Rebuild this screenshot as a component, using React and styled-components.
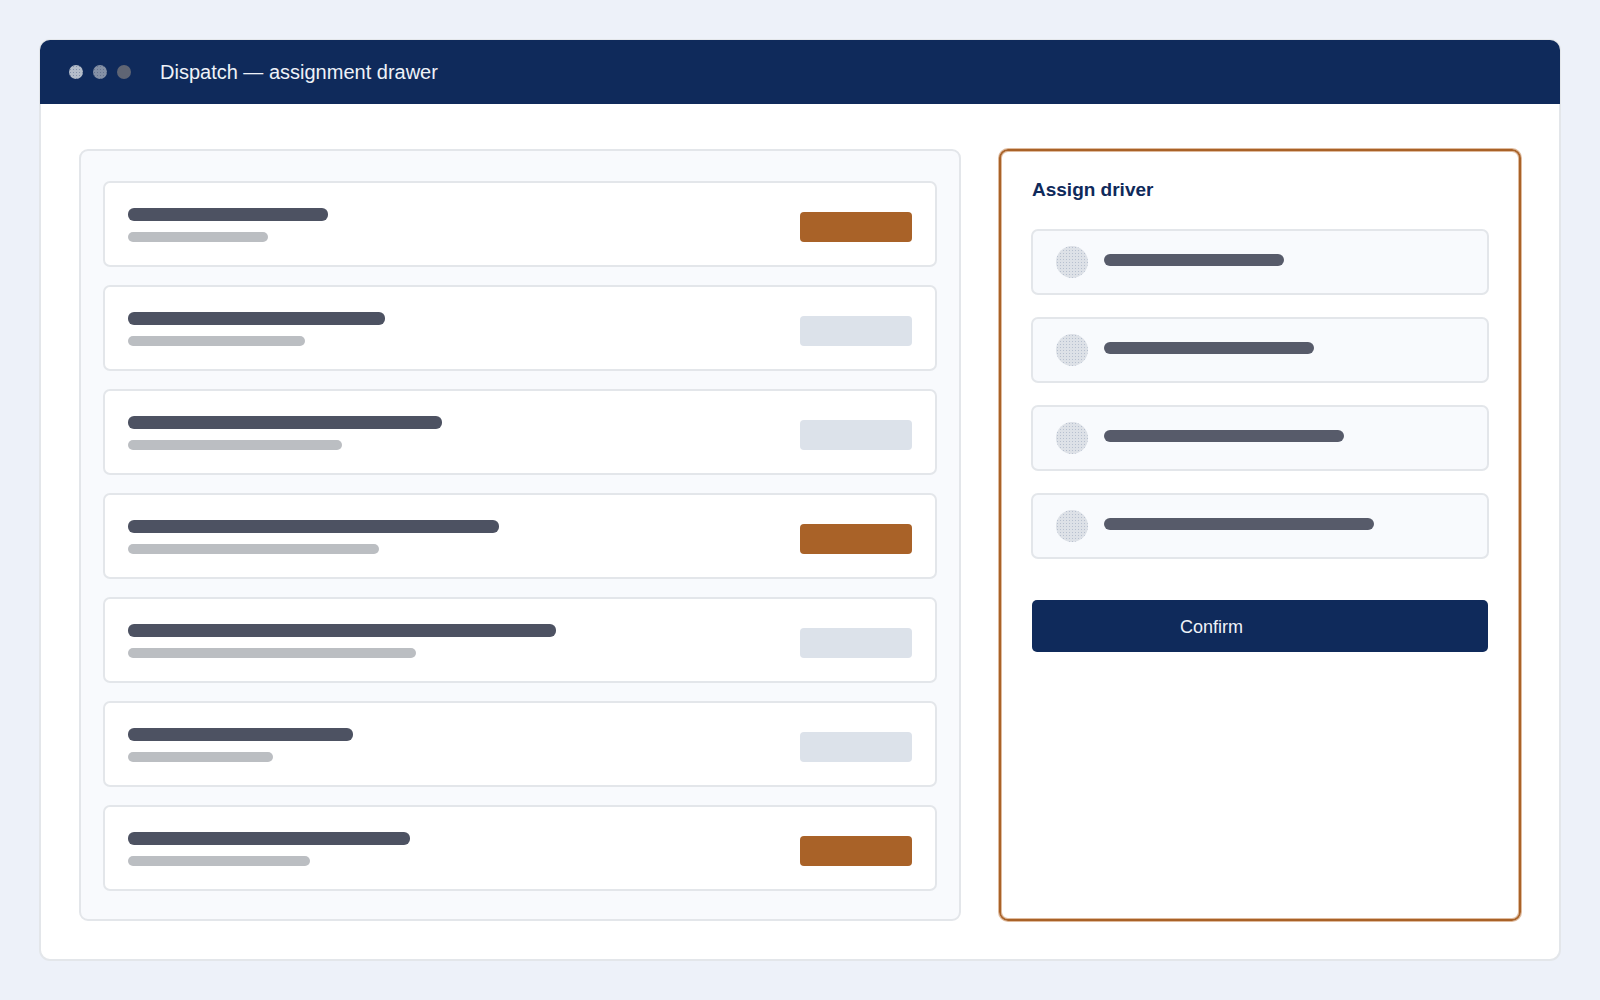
import styled, { createGlobalStyle, css } from "styled-components";

const color = {
  page: "#edf1f9",
  surface: "#ffffff",
  panel: "#f8fafd",
  border: "#e3e6ea",
  navy: "#0f2a5b",
  accent: "#a96228",
  accentSoft: "rgba(184, 104, 40, 0.45)",
  idle: "#dce2ea",
  barStrong: "#4d5262",
  barMuted: "#bbbec2",
  barDriver: "#575b6a",
  inkInverse: "#eef2f8",
};

const jobs = [
  { id: 1, title: 200, detail: 140, active: true },
  { id: 2, title: 257, detail: 177, active: false },
  { id: 3, title: 314, detail: 214, active: false },
  { id: 4, title: 371, detail: 251, active: true },
  { id: 5, title: 428, detail: 288, active: false },
  { id: 6, title: 225, detail: 145, active: false },
  { id: 7, title: 282, detail: 182, active: true },
];

const drivers = [
  { id: 1, name: 180 },
  { id: 2, name: 210 },
  { id: 3, name: 240 },
  { id: 4, name: 270 },
];

export default function App() {
  return (
    <>
      <GlobalStyle />
      <Page>
        <Window>
          <TitleBar>
            <Dots>
              <Dot $base="#b4bdca" $speck="#8391aa" />
              <Dot $base="#8490a5" $speck="#66748f" />
              <Dot $base="#5f6574" $speck="#5f6574" />
            </Dots>
            <WindowTitle>Dispatch — assignment drawer</WindowTitle>
          </TitleBar>
          <Body>
            <JobList>
              {jobs.map((job) => (
                <JobRow key={job.id}>
                  <JobText>
                    <Bar $height={13} $tone="barStrong" style={{ width: job.title }} />
                    <Bar $height={10} $tone="barMuted" style={{ width: job.detail }} />
                  </JobText>
                  <Status $active={job.active} />
                </JobRow>
              ))}
            </JobList>
            <Drawer>
              <DrawerTitle>Assign driver</DrawerTitle>
              <DriverList>
                {drivers.map((driver) => (
                  <DriverCard key={driver.id}>
                    <Avatar $base="#dde1e7" $speck="#b7c0cf" />
                    <Bar $height={12} $tone="barDriver" style={{ width: driver.name }} />
                  </DriverCard>
                ))}
              </DriverList>
              <ConfirmButton type="button">Confirm</ConfirmButton>
            </Drawer>
          </Body>
        </Window>
      </Page>
    </>
  );
}

// ─── Styled components ───

const GlobalStyle = createGlobalStyle`
  *, *::before, *::after {
    box-sizing: border-box;
  }

  body {
    margin: 0;
    background: ${color.page};
    font-family: "Liberation Sans", Arial, sans-serif;
  }
`;

// Fine stipple laid over a flat fill.
const stipple = css`
  background-color: ${({ $base }) => $base};
  background-image: radial-gradient(circle, ${({ $speck }) => $speck} 20%, transparent 45%);
  background-size: 3px 3px;
`;

const Page = styled.main`
  min-height: 100vh;
  padding: 39px;
`;

const Window = styled.section`
  border: 2px solid ${color.border};
  border-radius: 11px;
  background: ${color.surface};
`;

// The bar runs over the inner half of the window border.
const TitleBar = styled.header`
  display: flex;
  align-items: center;
  gap: 29px;
  height: 64px;
  margin: -1px -1px 0;
  padding: 0 29px;
  border-radius: 10px 10px 0 0;
  background: ${color.navy};
`;

const Dots = styled.div`
  display: flex;
  gap: 10px;
`;

const Dot = styled.span`
  width: 14px;
  height: 14px;
  border-radius: 50%;
  ${stipple}
`;

const WindowTitle = styled.h1`
  margin: 0;
  font-size: 20px;
  font-weight: 400;
  line-height: 24px;
  color: ${color.inkInverse};
`;

const Body = styled.div`
  display: grid;
  grid-template-columns: 882fr 522fr;
  gap: 38px;
  padding: 45px 38px 38px;
`;

const JobList = styled.ul`
  display: flex;
  flex-direction: column;
  gap: 18px;
  margin: 0;
  padding: 30px 22px 28px;
  border: 2px solid ${color.border};
  border-radius: 9px;
  background: ${color.panel};
  list-style: none;
`;

const JobRow = styled.li`
  display: flex;
  align-items: flex-end;
  justify-content: space-between;
  padding: 25px 23px 23px;
  border: 2px solid ${color.border};
  border-radius: 7px;
  background: ${color.surface};
`;

const JobText = styled.div`
  display: flex;
  flex-direction: column;
  gap: 11px;
`;

const Bar = styled.div`
  height: ${({ $height }) => $height}px;
  border-radius: 6px;
  background: ${({ $tone }) => color[$tone]};
`;

const Status = styled.div`
  width: 112px;
  height: 30px;
  border-radius: 4px;
  background: ${({ $active }) => ($active ? color.accent : color.idle)};
`;

const Drawer = styled.aside`
  padding: 27px 30px;
  border: 2px solid ${color.accent};
  border-radius: 9px;
  box-shadow:
    0 0 0 1px ${color.accentSoft},
    inset 0 0 0 1px ${color.accentSoft};
`;

const DrawerTitle = styled.h2`
  margin: 0 1px 27px;
  font-size: 19px;
  font-weight: 700;
  line-height: 24px;
  color: ${color.navy};
`;

const DriverList = styled.ul`
  display: flex;
  flex-direction: column;
  gap: 22px;
  margin: 0;
  padding: 0;
  list-style: none;
`;

const DriverCard = styled.li`
  display: flex;
  gap: 16px;
  padding: 15px 23px;
  border: 2px solid ${color.border};
  border-radius: 7px;
  background: ${color.panel};

  ${Bar} {
    margin-top: 8px;
  }
`;

const Avatar = styled.div`
  width: 32px;
  height: 32px;
  border-radius: 50%;
  ${stipple}
`;

const ConfirmButton = styled.button`
  display: block;
  width: calc(100% - 2px);
  margin: 41px 1px 0;
  padding: 15px 148px 13px;
  border: 0;
  border-radius: 5px;
  background: ${color.navy};
  font-family: inherit;
  font-size: 18px;
  line-height: 24px;
  text-align: left;
  color: ${color.inkInverse};
  cursor: pointer;
`;
